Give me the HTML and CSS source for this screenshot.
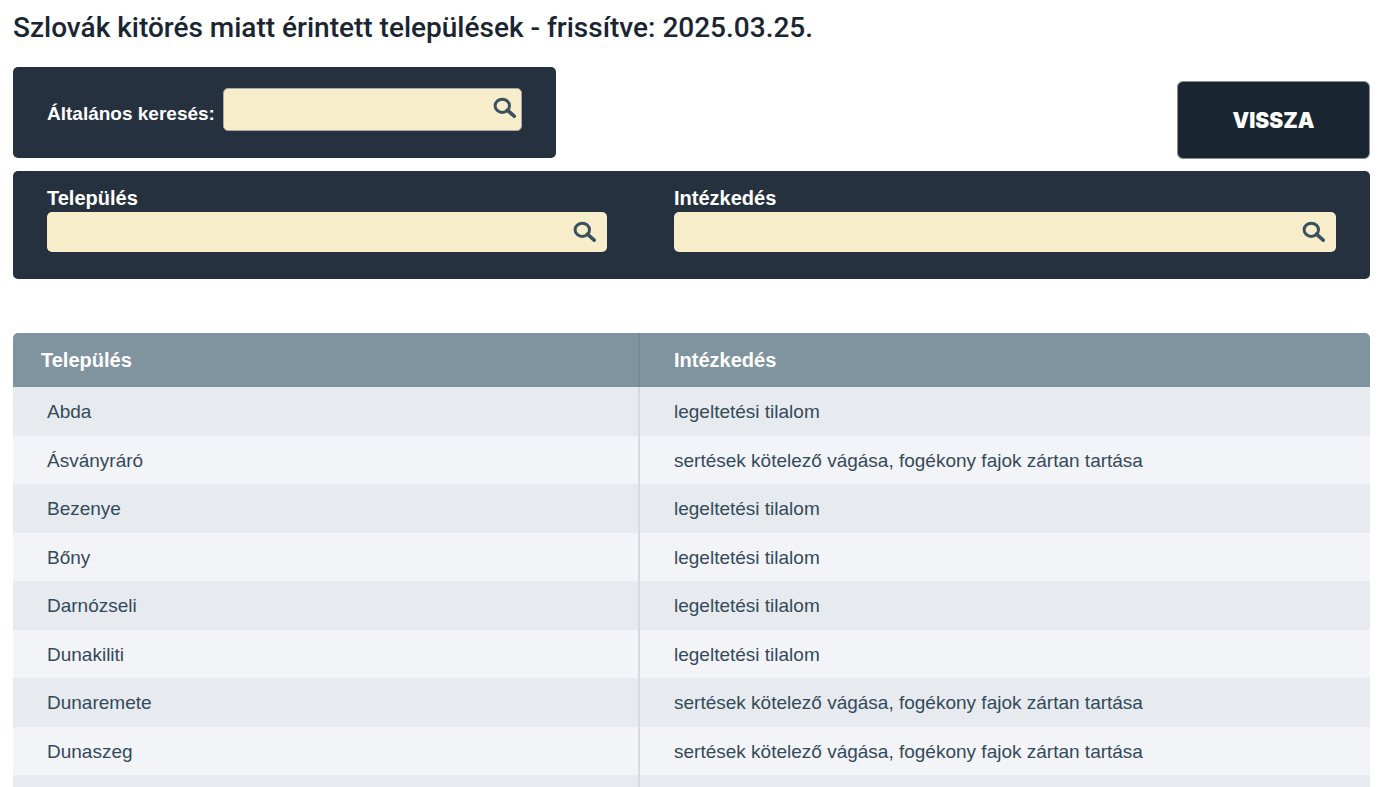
FILE: index.html
```html
<!DOCTYPE html>
<html lang="hu">
<head>
<meta charset="utf-8">
<meta name="viewport" content="width=device-width, initial-scale=1">
<title>Szlovák kitörés miatt érintett települések</title>
<link rel="stylesheet" href="styles.css">
</head>
<body>
<svg class="sprite" aria-hidden="true">
  <symbol id="magnifier" viewBox="0 0 24 22">
    <ellipse cx="9.3" cy="8.8" rx="7.2" ry="6.6" fill="none" stroke="#3a525f" stroke-width="3"/>
    <path d="M14.4 13.2 21.2 19.2" fill="none" stroke="#3a525f" stroke-width="3.6" stroke-linecap="round"/>
  </symbol>
</svg>
<main class="page">
  <h1 class="title">Szlovák kitörés miatt érintett települések - frissítve: 2025.03.25.</h1>
  <div class="toolbar">
    <div class="panel general">
      <label class="label" for="general">Általános keresés:</label>
      <div class="search search-outlined">
        <input class="input" id="general" type="text">
        <svg class="icon" aria-hidden="true"><use href="#magnifier"/></svg>
      </div>
    </div>
    <button class="back" type="button">VISSZA</button>
  </div>
  <div class="panel filters">
    <div class="filter">
      <label class="label" for="town">Település</label>
      <div class="search">
        <input class="input" id="town" type="text">
        <svg class="icon" aria-hidden="true"><use href="#magnifier"/></svg>
      </div>
    </div>
    <div class="filter">
      <label class="label" for="measure">Intézkedés</label>
      <div class="search">
        <input class="input" id="measure" type="text">
        <svg class="icon" aria-hidden="true"><use href="#magnifier"/></svg>
      </div>
    </div>
  </div>
  <table class="table">
    <thead>
      <tr><th scope="col">Település</th><th scope="col">Intézkedés</th></tr>
    </thead>
    <tbody>
      <tr><td>Abda</td><td>legeltetési tilalom</td></tr>
      <tr><td>Ásványráró</td><td>sertések kötelező vágása, fogékony fajok zártan tartása</td></tr>
      <tr><td>Bezenye</td><td>legeltetési tilalom</td></tr>
      <tr><td>Bőny</td><td>legeltetési tilalom</td></tr>
      <tr><td>Darnózseli</td><td>legeltetési tilalom</td></tr>
      <tr><td>Dunakiliti</td><td>legeltetési tilalom</td></tr>
      <tr><td>Dunaremete</td><td>sertések kötelező vágása, fogékony fajok zártan tartása</td></tr>
      <tr><td>Dunaszeg</td><td>sertések kötelező vágása, fogékony fajok zártan tartása</td></tr>
      <tr><td></td><td></td></tr>
    </tbody>
  </table>
</main>
</body>
</html>
```

FILE: styles.css
```css
* { box-sizing: border-box; }

body {
  margin: 0;
  background: #fff;
  color: #334a5a;
  font-family: "Liberation Sans", Arial, sans-serif;
  font-size: 19px;
}

.sprite { display: none; }

.page {
  height: 100vh;
  overflow: hidden;
  padding: 12px 10px 0 13px;
}

.title {
  margin: 0 0 23px;
  color: #1a2532;
  font-family: Roboto, sans-serif;
  font-size: 28px;
  font-weight: 500;
  line-height: 32px;
}

.toolbar {
  display: flex;
  justify-content: space-between;
  align-items: flex-end;
  margin-bottom: 13px;
}

.panel {
  background: #26313f;
  border-radius: 5px;
}

.label {
  color: #fff;
  font-size: 20px;
  font-weight: 700;
  line-height: 24px;
}

.general {
  display: flex;
  align-items: center;
  gap: 8px;
  padding: 21px 34px 27px;
}

.general .label {
  font-size: 19px;
  padding-top: 8px;
}

.search { position: relative; }

.search-outlined { width: 299px; }

.input {
  display: block;
  width: 100%;
  height: 40px;
  padding: 0 40px 0 10px;
  border: 0;
  border-radius: 5px;
  background: #f8edca;
  color: #26313f;
  font: inherit;
}

.search-outlined .input {
  height: 43px;
  border: 1px solid #a9a9a9;
}

.icon {
  position: absolute;
  top: 9px;
  right: 10px;
  width: 24px;
  height: 22px;
  pointer-events: none;
}

.search-outlined .icon { right: 5px; }

.back {
  width: 193px;
  height: 78px;
  margin-bottom: -1px;
  border: 1px solid #8e9097;
  border-radius: 6px;
  background: #1a2532;
  color: #fff;
  font-family: Inter, "Liberation Sans", sans-serif;
  font-size: 21px;
  font-weight: 900;
}

.filters {
  display: grid;
  grid-template-columns: 560fr 662fr;
  column-gap: 67px;
  margin-bottom: 54px;
  padding: 15px 34px 27px;
}

.filters .label {
  display: block;
  margin-bottom: 2px;
}

.table {
  width: 100%;
  table-layout: fixed;
  border-spacing: 0;
}

.table th,
.table td {
  padding: 0 34px;
  text-align: left;
}

.table th {
  height: 54px;
  background: #80949f;
  color: #fff;
  font-size: 20px;
}

.table th:first-child {
  width: 627px;
  padding-left: 28px;
  border-right: 2px solid #748a95;
  border-top-left-radius: 5px;
}

.table th:last-child { border-top-right-radius: 5px; }

.table td { height: 49px; background: #e7eaee; }

.table td:first-child { border-right: 2px solid #d7dbdf; }

.table tr:nth-child(even) td { height: 48px; padding-top: 1px; background: #f3f4f8; }
```
